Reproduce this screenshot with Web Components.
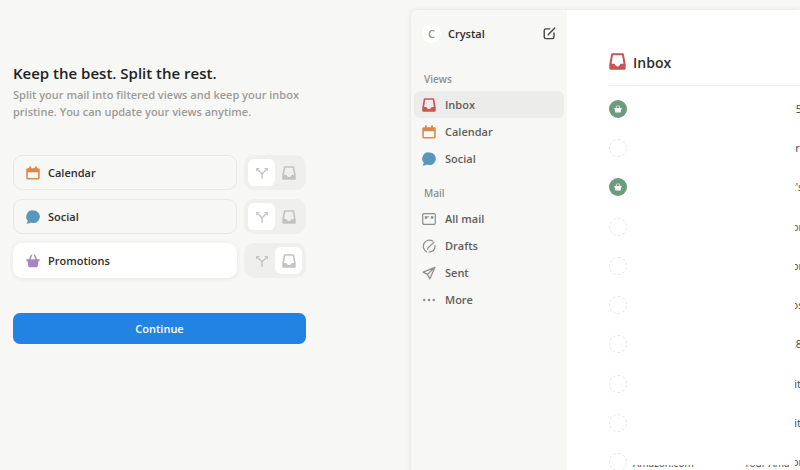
<!DOCTYPE html>
<html lang="en">
<head>
<meta charset="utf-8">
<meta name="viewport" content="width=device-width, initial-scale=1">
<title>Split your inbox</title>
<style>
    html, body {
        margin: 0;
        height: 100%;
    }

    body {
        background: #f7f7f5;
        color: #2f2e2b;
        font: 600 11px/16px "Open Sans", "Noto Sans", sans-serif;
        overflow: hidden;
    }
</style>
</head>
<body>
<split-app></split-app>

<script>
const ICONS = {
    calendar: `<path fill="currentColor" fill-rule="evenodd" d="M3.500.5h2.300v2h4.400v-2h2.300v2h1.500a1.700 1.700 0 0 1 1.700 1.700v9.600a1.700 1.700 0 0 1-1.700 1.700H2a1.700 1.700 0 0 1-1.700-1.700V4.200A1.700 1.700 0 0 1 2 2.500h1.500zM2.100 7v6.700h11.800V7z"/>`,
    social: `<path fill="currentColor" d="M8.500.5a7.200 7.200 0 1 1-3 13.700C4.200 15.200 2.400 15.700.4 15.500c1-.9 1.500-2 1.600-3.200A7.200 7.200 0 0 1 8.500.5z"/>`,
    basket: `<path fill="currentColor" d="M1 6h14a.7.7 0 0 1 .7.900l-.3.900a.8.8 0 0 1-.8.500h-.3l-1 6a1 1 0 0 1-1 .9H3.700a1 1 0 0 1-1-.9l-1-6h-.3a.8.8 0 0 1-.8-.5l-.3-.9A.7.7 0 0 1 1 6z"/><path fill="none" stroke="currentColor" stroke-width="1.600" stroke-linecap="round" d="M4 6.500 6.300 1.500M12 6.500 9.700 1.500"/>`,
    inbox: `<path fill="currentColor" fill-rule="evenodd" d="M3 .2h10a1 1 0 0 1 1 .9l1.700 9.400v4.200a1 1 0 0 1-1 1H1.300a1 1 0 0 1-1-1v-4.200L2 1.100A1 1 0 0 1 3 .2zM3.700 2 2.400 10.200h2.900c.3 1.500 1.300 2.400 2.700 2.400s2.400-.9 2.700-2.400h2.900L12.300 2z"/>`,
    split: `<path fill="none" stroke="currentColor" stroke-width="1.600" d="M8 14.500V9L3.500 4.500M8 9l4.500-4.500"/><path fill="currentColor" d="M1.300 2.300h4.200L1.300 6.500zM14.700 2.300h-4.200l4.200 4.200z"/>`,
    allmail: `<g fill="none" stroke="currentColor" stroke-width="1.400"><rect x=".8" y="1.800" width="14.400" height="12.400" rx="1.500"/><path d="M3.200 5.500h4.400M3.200 7.100h2.500"/></g><rect x="10" y="4.800" width="3" height="2.800" fill="currentColor"/>`,
    drafts: `<g fill="none" stroke="currentColor" stroke-width="1.400" stroke-linecap="round"><path d="M12.300 2.200A7 7 0 1 0 5 14.400M8 15c4.500-.2 7-3.200 6.900-7.500"/><path d="M13.800 3.600 7 10l-.8 1.600"/></g>`,
    sent: `<path fill="none" stroke="currentColor" stroke-width="1.400" stroke-linejoin="round" d="M14.800 1.500 1.200 7l5 2.600L9 14.700zM14.800 1.500 6.200 9.600"/>`,
    more: `<g fill="currentColor"><circle cx="2.500" cy="8" r="1.400"/><circle cx="8" cy="8" r="1.400"/><circle cx="13.500" cy="8" r="1.400"/></g>`,
    compose: `<path fill="none" stroke="currentColor" stroke-width="1.700" stroke-linecap="round" d="M8.500 2.300h-5a2 2 0 0 0-2 2v8a2 2 0 0 0 2 2h8a2 2 0 0 0 2-2v-5M14.500 1.300 7 8.800l-.6 1"/>`
};

class UiIcon extends HTMLElement {

    connectedCallback() {

        const root = this.attachShadow({mode: 'open'});

        root.innerHTML = `
            <style>
                :host {
                  display: block;
                  flex: none;
                  width: var(--icon-size, 14px);
                  height: var(--icon-size, 14px);
                }
                svg {
                  display: block;
                  width: 100%;
                  height: 100%;
                }
            </style>
            <svg viewBox="0 0 16 16" aria-hidden="true">${ICONS[this.getAttribute('name')]}</svg>
        `;
    }
}

class SplitOption extends HTMLElement {

    connectedCallback() {

        const root = this.attachShadow({mode: 'open'});
        const choice = this.getAttribute('choice');

        root.innerHTML = `
            <style>
                :host {
                  display: grid;
                  grid-template-columns: 1fr auto;
                  gap: 7px;
                }
                .name {
                  display: flex;
                  align-items: center;
                  gap: 8px;
                  padding: 0 12px;
                  border: 1px solid #e7e7e4;
                  border-radius: 9px;
                }
                :host([choice="inbox"]) .name {
                  background: #fff;
                  border-color: #fff;
                  box-shadow: 0 1px 5px rgba(0, 0, 0, .08);
                }
                .name ui-icon {
                  color: var(--tint);
                }
                .switch {
                  display: flex;
                  padding: 4px;
                  background: #efefed;
                  border-radius: 10px;
                }
                button {
                  display: grid;
                  place-items: center;
                  width: 27px;
                  height: 27px;
                  padding: 0;
                  border: 0;
                  border-radius: 6px;
                  background: none;
                  color: #c3c3c1;
                }
                button[aria-pressed="true"] {
                  background: #fff;
                }
            </style>
            <div class="name"><ui-icon name="${this.getAttribute('icon')}"></ui-icon><slot></slot></div>
            <div class="switch">
                <button type="button" aria-label="Split" aria-pressed="${choice === 'split'}"><ui-icon name="split"></ui-icon></button>
                <button type="button" aria-label="Keep in inbox" aria-pressed="${choice === 'inbox'}"><ui-icon name="inbox"></ui-icon></button>
            </div>
        `;

        const $buttons = root.querySelectorAll('button');

        $buttons.forEach(($button, i) => $button.addEventListener('click', () => {

            $buttons.forEach(($other) => $other.setAttribute('aria-pressed', $other === $button));
            this.setAttribute('choice', i ? 'inbox' : 'split');
        }));
    }
}

class SplitSetup extends HTMLElement {

    connectedCallback() {

        this.attachShadow({mode: 'open'}).innerHTML = `
            <style>
                :host {
                  display: block;
                  padding: 62px 0 0 13px;
                }
                h1 {
                  margin: 0 0 2px;
                  color: #22211f;
                  font-size: 15px;
                  font-weight: 600;
                  line-height: 22px;
                }
                p {
                  margin: 0;
                  color: #9c9b98;
                  line-height: 17px;
                }
                .options {
                  display: grid;
                  gap: 9px;
                  margin: 35px 0;
                }
                .continue {
                  width: 100%;
                  height: 31px;
                  padding: 0;
                  border: 0;
                  border-radius: 7px;
                  background: #2383e2;
                  color: #fff;
                  font: inherit;
                }
            </style>
            <h1>Keep the best. Split the rest.</h1>
            <p>Split your mail into filtered views and keep your inbox pristine. You can update your views anytime.</p>
            <div class="options">
                <split-option icon="calendar" choice="split" style="--tint: #d9894a">Calendar</split-option>
                <split-option icon="social" choice="split" style="--tint: #5a97bf">Social</split-option>
                <split-option icon="basket" choice="inbox" style="--tint: #a884c4">Promotions</split-option>
            </div>
            <button class="continue" type="button">Continue</button>
        `;
    }
}

class NavItem extends HTMLElement {

    connectedCallback() {

        this.attachShadow({mode: 'open'}).innerHTML = `
            <style>
                :host {
                  display: block;
                }
                a {
                  display: flex;
                  align-items: center;
                  gap: 9px;
                  height: 27px;
                  padding: 0 8px;
                  border-radius: 6px;
                  color: #5f5e5b;
                  text-decoration: none;
                }
                :host([current]) a {
                  background: #ececea;
                }
                ui-icon {
                  color: var(--tint, #8f8e8b);
                }
            </style>
            <a href="#"><ui-icon name="${this.getAttribute('icon')}"></ui-icon><slot></slot></a>
        `;
    }
}

class MailSidebar extends HTMLElement {

    connectedCallback() {

        this.attachShadow({mode: 'open'}).innerHTML = `
            <style>
                :host {
                  display: block;
                  padding: 14px 3px;
                  background: #f7f7f5;
                }
                header {
                  display: flex;
                  align-items: center;
                  gap: 7px;
                  padding: 0 5px 0 8px;
                }
                .avatar {
                  display: grid;
                  place-items: center;
                  width: 19px;
                  height: 19px;
                  border-radius: 50%;
                  background: #fff;
                  color: #8f8e8b;
                }
                .compose {
                  --icon-size: 13px;
                  margin-left: auto;
                  padding: 3px;
                  border: 0;
                  background: none;
                  color: #454441;
                }
                h2 {
                  margin: 0 0 4px;
                  padding: 0 10px;
                  color: #8f8e8b;
                  font-size: 10px;
                  font-weight: 600;
                  line-height: 16px;
                }
                .views {
                  margin: 28px 0 13px;
                }
            </style>
            <header>
                <span class="avatar">C</span>
                <span>Crystal</span>
                <button class="compose" type="button" aria-label="Compose"><ui-icon name="compose"></ui-icon></button>
            </header>
            <nav class="views">
                <h2>Views</h2>
                <nav-item icon="inbox" current style="--tint: #cd5556">Inbox</nav-item>
                <nav-item icon="calendar" style="--tint: #d9894a">Calendar</nav-item>
                <nav-item icon="social" style="--tint: #5a97bf">Social</nav-item>
            </nav>
            <nav class="mail">
                <h2>Mail</h2>
                <nav-item icon="allmail">All mail</nav-item>
                <nav-item icon="drafts">Drafts</nav-item>
                <nav-item icon="sent">Sent</nav-item>
                <nav-item icon="more">More</nav-item>
            </nav>
        `;
    }
}

class MailRow extends HTMLElement {

    connectedCallback() {

        const icon = this.hasAttribute('promo') ? '<ui-icon name="basket"></ui-icon>' : '';

        this.attachShadow({mode: 'open'}).innerHTML = `
            <style>
                :host {
                  display: grid;
                  grid-template-columns: 18px 94px 1fr 5px;
                  align-items: center;
                  color: #454441;
                  font-weight: 400;
                  white-space: nowrap;
                }
                .badge {
                  --icon-size: 8px;
                  box-sizing: border-box;
                  display: grid;
                  place-items: center;
                  width: 18px;
                  height: 18px;
                  border: 1px dashed #e4e4e2;
                  border-radius: 50%;
                }
                :host([promo]) .badge {
                  border: 0;
                  background: #6c9b7d;
                  color: #fff;
                }
                .cut {
                  display: flex;
                  align-items: flex-end;
                  height: 3px;
                  margin-top: 8px;
                  overflow: hidden;
                  font-size: 10px;
                }
                .sender {
                  margin-left: 6px;
                }
                .subject {
                  margin-left: 23px;
                }
                .end {
                  display: flex;
                  justify-content: center;
                  overflow: hidden;
                }
            </style>
            <span class="badge">${icon}</span>
            <span class="cut sender"><slot name="sender"></slot></span>
            <span class="cut subject"><slot name="subject"></slot></span>
            <span class="end"><slot></slot></span>
        `;
    }
}

class MailInbox extends HTMLElement {

    connectedCallback() {

        this.attachShadow({mode: 'open'}).innerHTML = `
            <style>
                :host {
                  display: flex;
                  flex-direction: column;
                  min-width: 0;
                  padding: 39px 0 0 42px;
                  background: #fff;
                }
                h1 {
                  --icon-size: 17px;
                  display: flex;
                  align-items: center;
                  gap: 7px;
                  margin: 0;
                  padding-bottom: 9px;
                  border-bottom: 1px solid #f1f1ef;
                  color: #2f2e2b;
                  font-size: 14px;
                  font-weight: 600;
                  line-height: 27px;
                }
                h1 ui-icon {
                  margin-bottom: 3px;
                  color: #c65455;
                }
                .rows {
                  flex: 1;
                  display: grid;
                  grid-auto-rows: 1fr;
                  padding-top: 3px;
                }
                [slot] {
                  line-height: 10px;
                }
            </style>
            <h1><ui-icon name="inbox"></ui-icon>Inbox</h1>
            <div class="rows">
                <mail-row promo>;5</mail-row>
                <mail-row>r</mail-row>
                <mail-row promo>t's</mail-row>
                <mail-row>or</mail-row>
                <mail-row>or</mail-row>
                <mail-row>os</mail-row>
                <mail-row>:8</mail-row>
                <mail-row>it</mail-row>
                <mail-row>it</mail-row>
                <mail-row><span slot="sender">Amazon.com</span><span slot="subject">Your Ama</span>or</mail-row>
            </div>
        `;
    }
}

class SplitApp extends HTMLElement {

    connectedCallback() {

        this.attachShadow({mode: 'open'}).innerHTML = `
            <style>
                :host {
                  display: grid;
                  grid-template-columns: 306px 1fr;
                  gap: 105px;
                  height: 100%;
                }
                .window {
                  display: grid;
                  grid-template-columns: 156px 1fr;
                  margin: 10px 0 -12px;
                  border-radius: 6px 0 0 0;
                  overflow: hidden;
                  box-shadow: 0 0 5px rgba(0, 0, 0, .1);
                }
            </style>
            <split-setup></split-setup>
            <div class="window">
                <mail-sidebar></mail-sidebar>
                <mail-inbox></mail-inbox>
            </div>
        `;
    }
}

window.customElements.define('ui-icon', UiIcon);
window.customElements.define('split-option', SplitOption);
window.customElements.define('split-setup', SplitSetup);
window.customElements.define('nav-item', NavItem);
window.customElements.define('mail-sidebar', MailSidebar);
window.customElements.define('mail-row', MailRow);
window.customElements.define('mail-inbox', MailInbox);
window.customElements.define('split-app', SplitApp);
</script>
</body>
</html>
